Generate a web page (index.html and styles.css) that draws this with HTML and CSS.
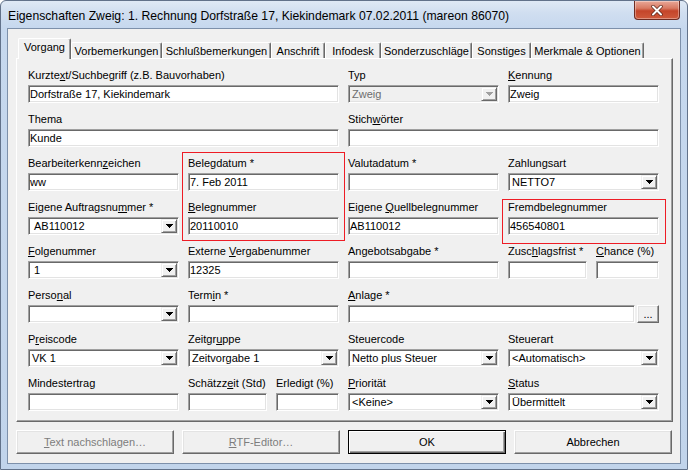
FILE: index.html
```html
<!DOCTYPE html>
<html lang="de">
<head>
<meta charset="utf-8">
<title>Eigenschaften Zweig</title>
<link rel="stylesheet" href="styles.css">
</head>
<body>
<div class="window">
  <div class="titlebar">
    <span class="title">Eigenschaften Zweig: 1. Rechnung Dorfstraße 17, Kiekindemark 07.02.2011 (mareon 86070)</span>
    <div class="close">
      <svg width="14" height="11" viewBox="0 0 14 11"><path d="M3 1.5L11 9.5M11 1.5L3 9.5" stroke="#5a2418" stroke-width="3.4" stroke-linecap="round"/><path d="M3 1.5L11 9.5M11 1.5L3 9.5" stroke="#fff" stroke-width="2" stroke-linecap="round"/></svg>
    </div>
  </div>
  <div class="client">
    <div class="tabs">
      <div class="tab active w1">Vorgang</div>
      <div class="tab w2">Vorbemerkungen</div>
      <div class="tab w3">Schlußbemerkungen</div>
      <div class="tab w4">Anschrift</div>
      <div class="tab w5">Infodesk</div>
      <div class="tab w6">Sonderzuschläge</div>
      <div class="tab w7">Sonstiges</div>
      <div class="tab w8">Merkmale &amp; Optionen</div>
    </div>
    <div class="panel">
      <div class="form">
        <div class="field span2">
          <label>Kurzte<u>x</u>t/Suchbegriff (z.B. Bauvorhaben)</label>
          <div class="edit">Dorfstraße 17, Kiekindemark</div>
        </div>
        <div class="field">
          <label>Typ</label>
          <div class="edit combo disabled"><span class="val">Zweig</span><span class="drop"><svg width="7" height="4" viewBox="0 0 7 4"><path d="M0 0h7v1h-1v1h-1v1h-1v1h-1v-1h-1v-1h-1v-1h-1z"/></svg></span></div>
        </div>
        <div class="field">
          <label><u>K</u>ennung</label>
          <div class="edit">Zweig</div>
        </div>

        <div class="field span2">
          <label>Thema</label>
          <div class="edit">Kunde</div>
        </div>
        <div class="field span2">
          <label>Stich<u>w</u>örter</label>
          <div class="edit"></div>
        </div>

        <div class="field">
          <label>Bearbeiterkenn<u>z</u>eichen</label>
          <div class="edit">ww</div>
        </div>
        <div class="field">
          <label>Belegdatum *</label>
          <div class="edit">7. Feb 2011</div>
        </div>
        <div class="field">
          <label>Valutadatum *</label>
          <div class="edit"></div>
        </div>
        <div class="field">
          <label>Zahlungsart</label>
          <div class="edit combo"><span class="val">NETTO7</span><span class="drop"><svg width="7" height="4" viewBox="0 0 7 4"><path d="M0 0h7v1h-1v1h-1v1h-1v1h-1v-1h-1v-1h-1v-1h-1z"/></svg></span></div>
        </div>

        <div class="field">
          <label>Eigene Auftragsnu<u>m</u>mer *</label>
          <div class="edit combo"><span class="val wide">AB110012</span><span class="drop"><svg width="7" height="4" viewBox="0 0 7 4"><path d="M0 0h7v1h-1v1h-1v1h-1v1h-1v-1h-1v-1h-1v-1h-1z"/></svg></span></div>
        </div>
        <div class="field">
          <label><u>B</u>elegnummer</label>
          <div class="edit">20110010</div>
        </div>
        <div class="field">
          <label>Eigene <u>Q</u>uellbelegnummer</label>
          <div class="edit">AB110012</div>
        </div>
        <div class="field">
          <label>Fremdbelegnummer</label>
          <div class="edit">456540801</div>
        </div>

        <div class="field">
          <label><u>F</u>olgenummer</label>
          <div class="edit combo"><span class="val wide">1</span><span class="drop"><svg width="7" height="4" viewBox="0 0 7 4"><path d="M0 0h7v1h-1v1h-1v1h-1v1h-1v-1h-1v-1h-1v-1h-1z"/></svg></span></div>
        </div>
        <div class="field">
          <label>Externe <u>V</u>ergabenummer</label>
          <div class="edit">12325</div>
        </div>
        <div class="field">
          <label>Angebotsabgabe *</label>
          <div class="edit"></div>
        </div>
        <div class="field pair">
          <div class="field">
            <label>Zusc<u>h</u>lagsfrist *</label>
            <div class="edit"></div>
          </div>
          <div class="field">
            <label><u>C</u>hance (%)</label>
            <div class="edit"></div>
          </div>
        </div>

        <div class="field">
          <label>Perso<u>n</u>al</label>
          <div class="edit combo"><span class="val"></span><span class="drop"><svg width="7" height="4" viewBox="0 0 7 4"><path d="M0 0h7v1h-1v1h-1v1h-1v1h-1v-1h-1v-1h-1v-1h-1z"/></svg></span></div>
        </div>
        <div class="field">
          <label>Term<u>i</u>n *</label>
          <div class="edit"></div>
        </div>
        <div class="field span2">
          <label><u>A</u>nlage *</label>
          <div class="row">
            <div class="edit grow"></div>
            <div class="dots">...</div>
          </div>
        </div>

        <div class="field">
          <label>P<u>r</u>eiscode</label>
          <div class="edit combo"><span class="val">VK 1</span><span class="drop"><svg width="7" height="4" viewBox="0 0 7 4"><path d="M0 0h7v1h-1v1h-1v1h-1v1h-1v-1h-1v-1h-1v-1h-1z"/></svg></span></div>
        </div>
        <div class="field">
          <label>Zeitgr<u>u</u>ppe</label>
          <div class="edit combo"><span class="val">Zeitvorgabe 1</span><span class="drop"><svg width="7" height="4" viewBox="0 0 7 4"><path d="M0 0h7v1h-1v1h-1v1h-1v1h-1v-1h-1v-1h-1v-1h-1z"/></svg></span></div>
        </div>
        <div class="field">
          <label>Steuercode</label>
          <div class="edit combo"><span class="val">Netto plus Steuer</span><span class="drop"><svg width="7" height="4" viewBox="0 0 7 4"><path d="M0 0h7v1h-1v1h-1v1h-1v1h-1v-1h-1v-1h-1v-1h-1z"/></svg></span></div>
        </div>
        <div class="field">
          <label>Steuerart</label>
          <div class="edit combo"><span class="val">&lt;Automatisch&gt;</span><span class="drop"><svg width="7" height="4" viewBox="0 0 7 4"><path d="M0 0h7v1h-1v1h-1v1h-1v1h-1v-1h-1v-1h-1v-1h-1z"/></svg></span></div>
        </div>

        <div class="field">
          <label>Mindestertrag</label>
          <div class="edit"></div>
        </div>
        <div class="field pair">
          <div class="field">
            <label>Schätzz<u>e</u>it (Std)</label>
            <div class="edit"></div>
          </div>
          <div class="field">
            <label>Erledigt (%)</label>
            <div class="edit"></div>
          </div>
        </div>
        <div class="field">
          <label><u>P</u>riorität</label>
          <div class="edit combo"><span class="val">&lt;Keine&gt;</span><span class="drop"><svg width="7" height="4" viewBox="0 0 7 4"><path d="M0 0h7v1h-1v1h-1v1h-1v1h-1v-1h-1v-1h-1v-1h-1z"/></svg></span></div>
        </div>
        <div class="field">
          <label><u>S</u>tatus</label>
          <div class="edit combo"><span class="val">Übermittelt</span><span class="drop"><svg width="7" height="4" viewBox="0 0 7 4"><path d="M0 0h7v1h-1v1h-1v1h-1v1h-1v-1h-1v-1h-1v-1h-1z"/></svg></span></div>
        </div>
      </div>
      <div class="mark mark1"></div>
      <div class="mark mark2"></div>
    </div>
    <div class="buttons">
      <div class="btn disabled"><span><u>T</u>ext nachschlagen…</span></div>
      <div class="btn disabled"><span><u>R</u>TF-Editor…</span></div>
      <div class="btn default">OK</div>
      <div class="btn">Abbrechen</div>
    </div>
  </div>
</div>
</body>
</html>
```

FILE: styles.css
```css
* { box-sizing: border-box; }
html, body { margin: 0; padding: 0; }
body {
  width: 688px;
  height: 470px;
  overflow: hidden;
  background: #fff;
  font-family: "Liberation Sans", Arial, sans-serif;
  font-size: 11px;
  color: #000;
}
.window {
  width: 688px;
  height: 470px;
  display: flex;
  flex-direction: column;
  border: 1px solid #62728a;
  border-radius: 6px 6px 0 0;
  background: linear-gradient(180deg, #dfe9f5 0, #d0def0 12px, #c6d8ee 27px, #c1d4eb 100%);
}
.titlebar {
  height: 27px;
  display: flex;
  align-items: flex-start;
  padding-left: 7px;
}
.title {
  margin-top: 8px;
  font-size: 12.2px;
  line-height: 14px;
  white-space: nowrap;
  color: #000;
}
.close {
  margin-left: auto;
  margin-right: 7px;
  width: 46px;
  height: 19px;
  border: 1px solid #6e2c22;
  border-top: none;
  border-radius: 0 0 4px 4px;
  background: linear-gradient(180deg, #e9a898 0, #d87a63 40%, #c4452a 55%, #cf5a3c 100%);
  box-shadow: inset 0 0 0 1px rgba(255,255,255,0.35);
  display: flex;
  align-items: center;
  justify-content: center;
}
.client {
  margin: 0 6px;
  height: 436px;
  border: 1px solid #7d90aa;
  background: #f0f0f0;
  padding: 9px 6px 0 8px;
  display: flex;
  flex-direction: column;
}
.tabs {
  display: flex;
  align-items: flex-end;
  height: 20px;
  padding-left: 2px;
}
.tab {
  height: 16px;
  border: 1px solid;
  border-bottom: none;
  border-color: #fff #696969 #fff #fff;
  border-radius: 2px 2px 0 0;
  box-shadow: inset -1px 0 #a0a0a0;
  padding-top: 1px;
  line-height: 14px;
  text-align: center;
  white-space: nowrap;
  font-size: 11px;
}
.tab.active {
  height: 21px;
  margin-bottom: -1px;
  padding-top: 1px;
  position: relative;
  z-index: 1;
  background: #f0f0f0;
}
.w1 { width: 53px; }
.w2 { width: 91px; }
.w3 { width: 109px; }
.w4 { width: 54px; }
.w5 { width: 56px; }
.w6 { width: 91px; }
.w7 { width: 59px; }
.w8 { width: 113px; }
.panel {
  width: 657px;
  height: 364px;
  position: relative;
  border: 1px solid;
  border-color: #fff #696969 #696969 #fff;
  box-shadow: inset -1px -1px #a0a0a0;
  padding: 10px 0 0 11px;
}
.form {
  display: grid;
  grid-template-columns: repeat(4, 151px);
  column-gap: 9px;
  row-gap: 10px;
}
.field {
  display: flex;
  flex-direction: column;
  min-width: 0;
}
.span2 { grid-column: span 2; }
.pair {
  display: grid;
  grid-template-columns: 79px 63px;
  column-gap: 9px;
}
label {
  display: block;
  height: 13px;
  line-height: 13px;
  margin-bottom: 3px;
  white-space: nowrap;
}
.edit {
  height: 18px;
  border: 1px solid;
  border-color: #a0a0a0 #fff #fff #a0a0a0;
  padding: 1px;
  box-shadow: inset 1px 1px #696969, inset -1px -1px #e3e3e3;
  background: #fff;
  line-height: 14px;
  white-space: nowrap;
  overflow: hidden;
}
.combo { display: flex; }
.val {
  flex: 1;
  padding-left: 2px;
  overflow: hidden;
}
.val.wide { padding-left: 4px; }
.drop {
  width: 16px;
  height: 14px;
  background: #f0f0f0;
  border: 1px solid;
  border-color: #f0f0f0 #696969 #696969 #f0f0f0;
  box-shadow: inset 1px 1px #fff, inset -1px -1px #a0a0a0;
  display: flex;
  align-items: center;
  justify-content: center;
}
.drop svg { display: block; fill: #000; }
.combo.disabled { background: #f0f0f0; color: #6d6d6d; }
.combo.disabled .drop svg { fill: #a0a0a0; }
.row {
  display: flex;
  gap: 2px;
}
.grow { flex: 1; }
.dots {
  width: 22px;
  height: 18px;
  border: 1px solid;
  border-color: #fff #696969 #696969 #fff;
  box-shadow: inset -1px -1px #a0a0a0, inset 1px 1px #e3e3e3;
  background: #f0f0f0;
  text-align: center;
  line-height: 17px;
}
.mark {
  position: absolute;
  z-index: 2;
  border: 1px solid #ee1c25;
}
.mark1 { left: 165px; top: 93px; width: 163px; height: 89px; }
.mark2 { left: 485px; top: 140px; width: 164px; height: 45px; }
.buttons {
  display: flex;
  gap: 8px;
  margin-top: 8px;
}
.btn {
  width: 158px;
  height: 24px;
  border: 1px solid;
  border-color: #fff #696969 #696969 #fff;
  box-shadow: inset -1px -1px #a0a0a0, inset 1px 1px #e3e3e3;
  background: #f0f0f0;
  display: flex;
  align-items: center;
  justify-content: center;
  white-space: nowrap;
}
.btn.disabled { color: #7d7d7d; }
.btn.default {
  border-color: #000;
  box-shadow: inset 1px 1px #fff, inset -1px -1px #696969, inset -2px -2px #a0a0a0;
}
```
